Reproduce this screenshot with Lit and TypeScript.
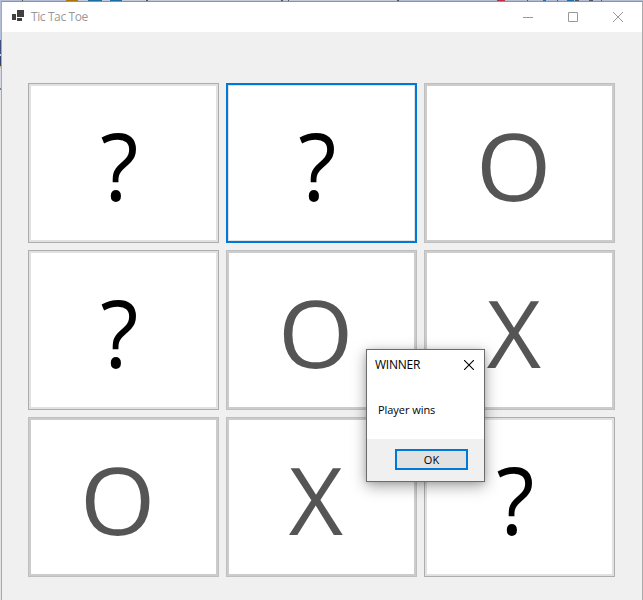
import { LitElement, html, css } from "lit";
import { customElement, property, state } from "lit/decorators.js";
import { classMap } from "lit/directives/class-map.js";

@customElement("board-cell")
class BoardCell extends LitElement {
  @property() mark = "?";
  @property({ type: Boolean }) focused = false;

  static styles = css`
    :host { display: block; }
    .cell {
      box-sizing: border-box; width: 100%; height: 100%;
      display: flex; align-items: center; justify-content: center;
      background: #fff; border: 1px solid #adadad;
      box-shadow: inset 0 0 0 2px #e1e1e1;
      font: 94px/100px "Open Sans", "Noto Sans", sans-serif; color: #000;
      padding: 4px 9px 0 0;
    }
    .taken { border-color: #bfbfbf; box-shadow: inset 0 0 0 2px #ccc; color: #555; padding-right: 11px; }
    .focused { border: 2px solid #0078d7; box-shadow: inset 0 0 0 1px #e1e1e1; }
    .glyph { display: block; transform: scaleX(0.94); }
    .o { transform: scaleX(1.03); }
    .x { transform: none; }
  `;

  render() {
    return html`<div class=${classMap({ cell: true, taken: this.mark !== "?", focused: this.focused })}>
      <span class=${classMap({ glyph: true, o: this.mark === "O", x: this.mark === "X" })}>${this.mark}</span>
    </div>`;
  }
}

@customElement("message-box")
class MessageBox extends LitElement {
  static styles = css`
    :host {
      box-sizing: border-box; display: flex; flex-direction: column;
      background: #fff; border: 1px solid #6b6b6b; color: #000;
      box-shadow: 0 4px 14px rgba(0, 0, 0, 0.36), 0 1px 5px rgba(0, 0, 0, 0.12);
      font: 11px/16px "Open Sans", "Noto Sans", sans-serif;
    }
    .head { height: 30px; box-sizing: border-box; padding: 0 10px 0 8px; display: flex; align-items: center; justify-content: space-between; }
    .title { font-size: 12px; letter-spacing: -0.25px; }
    .body { flex: 1; padding: 22px 0 0 11px; letter-spacing: -0.05px; }
    .foot { height: 42px; box-sizing: border-box; background: #f0f0f0; padding: 10px 16px 0 0; display: flex; justify-content: flex-end; }
    .ok {
      box-sizing: border-box; width: 73px; height: 21px; border: 2px solid #0078d7;
      background: #e1e1e1; padding: 0; font: inherit; color: inherit;
      display: flex; align-items: center; justify-content: center;
    }
    svg { display: block; margin-bottom: 1px; }
  `;

  render() {
    return html`
      <div class="head">
        <span class="title">WINNER</span>
        <svg width="10" height="10" viewBox="0 0 10 10"><path d="M0 0l10 10M10 0L0 10" stroke="#000" stroke-width="1.1" /></svg>
      </div>
      <div class="body">Player wins</div>
      <div class="foot"><button class="ok">OK</button></div>
    `;
  }
}

@customElement("app-root")
class AppRoot extends LitElement {
  @state() marks = ["?", "?", "O", "?", "O", "X", "O", "X", "?"];

  static styles = css`
    :host {
      display: block; position: relative; box-sizing: border-box; height: 600px; width: 643px;
      overflow: hidden; padding: 1px 0 0 1px;
      background: linear-gradient(#b4bdd8 0 40px, #3f4e80 40px 54px, #c9cbd3 54px 56px, #2f4577 56px 66px, #e0b970 66px 68px, #d5d9e4 68px 88px, #767b9b 88px 90px, #e3e3e3 90px);
    }
    .toolbar { position: absolute; left: 0; top: 0; display: block; }
    .window {
      box-sizing: border-box; width: 642px; height: 600px;
      border: 1px solid #a9a9a9; border-top-color: #8c91a4; border-bottom: 0;
      background: #f0f0f0; display: flex; flex-direction: column;
    }
    .titlebar {
      height: 30px; flex: none; box-sizing: border-box; background: #fff; padding: 0 19px 0 10px;
      display: flex; align-items: center; color: #999;
      font: 12px/16px "Open Sans", "Noto Sans", sans-serif;
    }
    .logo { margin: 0 6px 2px 0; }
    .title { flex: 1; letter-spacing: -0.4px; }
    .controls { display: flex; gap: 35px; }
    svg { display: block; }
    .board { display: grid; grid-template-columns: repeat(3, 191px); grid-auto-rows: 160px; gap: 7px; padding: 51px 0 0 26px; }
    .dialog { position: absolute; left: 366px; top: 349px; width: 119px; height: 133px; }
  `;

  render() {
    return html`
      <svg class="toolbar" width="643" height="1" viewBox="0 0 643 1">
        <rect x="68" width="330" height="1" fill="#c5cad8" />
        <rect x="66" width="12" height="1" fill="#ab760e" />
        <path d="M88 .5h14M110 .5h12M543 .5h3M567 .5h7" stroke="#1c6ca5" />
        <path d="M22 .5h1M146 .5h2M281 .5h2M288 .5h1M397 .5h2M527 .5h1M557 .5h1M575 .5h4M589 .5h4M601 .5h1" stroke="#50525c" />
        <path d="M497 .5h8" stroke="#b63248" />
      </svg>
      <div class="window">
        <div class="titlebar">
          <svg class="logo" width="13" height="12" viewBox="0 0 13 12" shape-rendering="crispEdges">
            <path d="M5 0h7v7H5zM0 4h4v6H0zM5 8h5v3H5z" fill="#404040" />
          </svg>
          <span class="title">Tic Tac Toe</span>
          <div class="controls">
            <svg width="10" height="10" viewBox="0 0 10 10"><path d="M0 5.5h10" stroke="#999" /></svg>
            <svg width="10" height="10" viewBox="0 0 10 10"><path d="M.5.5h9v9h-9z" fill="none" stroke="#999" /></svg>
            <svg width="10" height="10" viewBox="0 0 10 10"><path d="M0 0l10 10M10 0L0 10" stroke="#999" /></svg>
          </div>
        </div>
        <div class="board">
          ${this.marks.map((m, i) => html`<board-cell .mark=${m} .focused=${i === 1}></board-cell>`)}
        </div>
      </div>
      <message-box class="dialog"></message-box>
    `;
  }
}
